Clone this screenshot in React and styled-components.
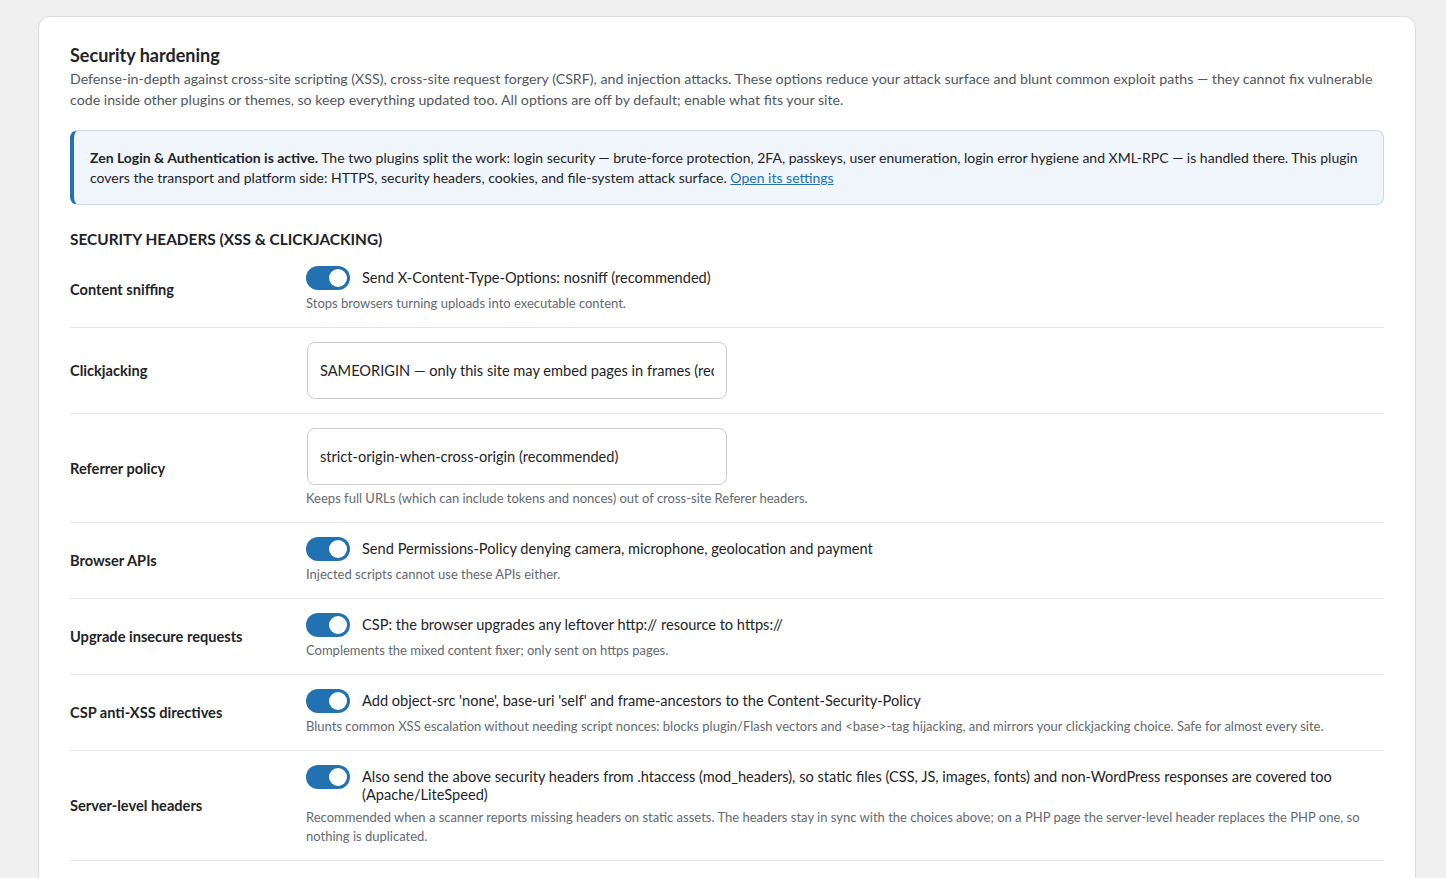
import React from 'react';
import styled, { createGlobalStyle } from 'styled-components';

const GlobalStyle = createGlobalStyle`
	html, body {
		margin: 0;
		padding: 0;
		background: #f0f0f1;
	}
	body {
		font-family: Lato, "Noto Sans", sans-serif;
		color: #1d2327;
		font-size: 14px;
	}
`;

const Page = styled.div`
	padding: 16px 30px 0 38px;
	height: 862px;
	overflow: hidden;
`;

const Card = styled.div`
	background: #fff;
	border: 1px solid #dcdcde;
	border-radius: 12px;
	padding: 26px 31px 40px 31px;
	min-height: 900px;
`;

const Title = styled.h2`
	margin: 0 0 1px;
	font-size: 18px;
	font-weight: 700;
	line-height: 24px;
	color: #1d2327;
`;

const Lead = styled.p`
	margin: 0 0 20px;
	font-size: 14.2px;
	line-height: 21px;
	color: #50575e;
`;

const Notice = styled.div`
	background: #f0f6fc;
	border: 1px solid #c5d9ed;
	border-left: 4px solid #2271b1;
	border-radius: 8px;
	padding: 17px 20px 16px 16px;
	font-size: 14px;
	line-height: 20px;
	color: #1d2327;

	strong {
		font-weight: 700;
	}

	a {
		color: #2271b1;
		text-decoration: underline;
	}
`;

const SectionHeading = styled.h3`
	margin: 24px 0 3px;
	font-size: 15.4px;
	font-weight: 700;
	line-height: 20px;
	text-transform: uppercase;
	color: #1d2327;
`;

const Row = styled.div`
	display: grid;
	grid-template-columns: 236px 1fr;
	align-items: center;
	padding: 14px 0;
	border-bottom: 1px solid #e6e6e8;
`;

const Label = styled.div`
	font-size: 14.6px;
	font-weight: 700;
	color: #1d2327;
`;

const Control = styled.div`
	display: flex;
	flex-direction: column;
`;

const ToggleLine = styled.label`
	display: flex;
	align-items: flex-start;
	gap: 12px;
	font-size: 14.6px;
	line-height: 18px;
	color: #1d2327;
`;

const Switch = styled.span`
	flex: none;
	position: relative;
	width: 44px;
	height: 24px;
	border-radius: 12px;
	background: ${p => (p.$on ? '#2271b1' : '#c3c4c7')};

	&::after {
		content: '';
		position: absolute;
		top: 3px;
		left: ${p => (p.$on ? '23px' : '3px')};
		width: 18px;
		height: 18px;
		border-radius: 50%;
		background: #fff;
	}
`;

const ToggleText = styled.span`
	padding-top: 3px;
`;

const Help = styled.p`
	margin: 4px 0 0;
	font-size: 13px;
	line-height: 19px;
	color: #646970;
`;

const Select = styled.div`
	width: 420px;
	height: 57px;
	margin-left: 1px;
	box-sizing: border-box;
	border: 1px solid #c8ccd1;
	border-radius: 8px;
	padding: 0 12px;
	display: flex;
	align-items: center;
	font-size: 14.6px;
	color: #1d2327;
`;

const SelectValue = styled.span`
	flex: 1;
	overflow: hidden;
	white-space: nowrap;
`;

const rows = [
	{
		label: 'Content sniffing',
		toggle: 'Send X-Content-Type-Options: nosniff (recommended)',
		help: 'Stops browsers turning uploads into executable content.',
	},
	{
		label: 'Clickjacking',
		select: 'SAMEORIGIN — only this site may embed pages in frames (recommended)',
	},
	{
		label: 'Referrer policy',
		select: 'strict-origin-when-cross-origin (recommended)',
		help: 'Keeps full URLs (which can include tokens and nonces) out of cross-site Referer headers.',
	},
	{
		label: 'Browser APIs',
		toggle: 'Send Permissions-Policy denying camera, microphone, geolocation and payment',
		help: 'Injected scripts cannot use these APIs either.',
	},
	{
		label: 'Upgrade insecure requests',
		toggle: 'CSP: the browser upgrades any leftover http:// resource to https://',
		help: 'Complements the mixed content fixer; only sent on https pages.',
	},
	{
		label: 'CSP anti-XSS directives',
		toggle: "Add object-src 'none', base-uri 'self' and frame-ancestors to the Content-Security-Policy",
		help: 'Blunts common XSS escalation without needing script nonces: blocks plugin/Flash vectors and <base>-tag hijacking, and mirrors your clickjacking choice. Safe for almost every site.',
	},
	{
		label: 'Server-level headers',
		toggle: 'Also send the above security headers from .htaccess (mod_headers), so static files (CSS, JS, images, fonts) and non-WordPress responses are covered too (Apache/LiteSpeed)',
		help: 'Recommended when a scanner reports missing headers on static assets. The headers stay in sync with the choices above; on a PHP page the server-level header replaces the PHP one, so nothing is duplicated.',
	},
];

export default function App() {
	return (
		<>
			<GlobalStyle />
			<Page>
				<Card>
					<Title>Security hardening</Title>
					<Lead>
						Defense-in-depth against cross-site scripting (XSS), cross-site request forgery (CSRF), and injection attacks. These options reduce your attack surface and blunt common exploit paths — they cannot fix vulnerable code inside other plugins or themes, so keep everything updated too. All options are off by default; enable what fits your site.
					</Lead>

					<Notice>
						<strong>Zen Login &amp; Authentication is active.</strong> The two plugins split the work: login security — brute-force protection, 2FA, passkeys, user enumeration, login error hygiene and XML-RPC — is handled there. This plugin covers the transport and platform side: HTTPS, security headers, cookies, and file-system attack surface. <a href="#settings">Open its settings</a>
					</Notice>

					<SectionHeading>Security headers (XSS &amp; clickjacking)</SectionHeading>

					{rows.map(row => (
						<Row key={row.label}>
							<Label>{row.label}</Label>
							<Control>
								{row.toggle && (
									<ToggleLine>
										<Switch $on />
										<ToggleText>{row.toggle}</ToggleText>
									</ToggleLine>
								)}
								{row.select && (
									<Select>
										<SelectValue>{row.select}</SelectValue>
									</Select>
								)}
								{row.help && <Help>{row.help}</Help>}
							</Control>
						</Row>
					))}
				</Card>
			</Page>
		</>
	);
}
